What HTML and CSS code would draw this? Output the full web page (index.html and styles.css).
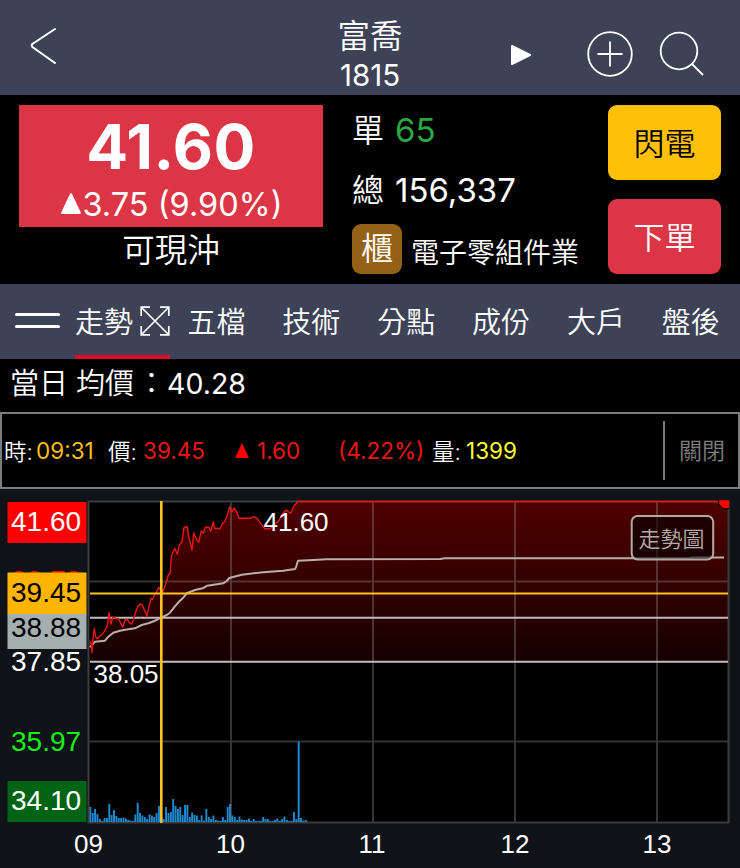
FILE: index.html
```html
<!DOCTYPE html>
<html lang="zh-Hant">
<head>
    <meta charset="UTF-8">
    <meta name="viewport" content="width=device-width, initial-scale=1.0">
    <title>富喬 1815</title>
    <link rel="stylesheet" href="styles.css">
</head>
<body>
    <header class="topbar">
        <svg class="back" viewBox="0 0 27 38"><path d="M25 2 L2.4 17 Q1 18.5 2.4 20 L25 36"/></svg>
        <div class="title">
            <div class="stock-name">富喬</div>
            <div class="stock-id">1815</div>
        </div>
        <div class="actions">
            <svg class="play" viewBox="0 0 22 22"><path d="M2 2 L20 11 L2 20 Z"/></svg>
            <svg class="add" viewBox="0 0 46 46"><circle cx="23" cy="23" r="21.8"/><path d="M10.5 23 H35.5 M23 10.5 V35.5"/></svg>
            <svg class="search" viewBox="0 0 46 46"><circle cx="20" cy="20" r="18.3"/><path d="M32.5 32.5 L44 44"/></svg>
        </div>
    </header>

    <section class="quote">
        <div class="price-col">
            <div class="price-box">
                <div class="price">41.60</div>
                <div class="change"><svg class="up" viewBox="0 0 21 22"><path d="M10.5 2 L19 20 H2 Z"/></svg><span>3.75 (9.90%)</span></div>
            </div>
            <div class="daytrade">可現沖</div>
        </div>
        <div class="detail">
            <div class="row"><span class="label">單</span><span class="num green">65</span></div>
            <div class="row"><span class="label">總</span><span class="num">156,337</span></div>
            <div class="row"><span class="market">櫃</span><span class="industry">電子零組件業</span></div>
        </div>
        <div class="buttons">
            <button class="btn flash">閃電</button>
            <button class="btn order">下單</button>
        </div>
    </section>

    <nav class="tabs">
        <div class="menu"><i></i><i></i></div>
        <div class="tab active">
            <span>走勢</span>
            <svg class="expand" viewBox="0 0 30 30"><path d="M1.5 1.5 L28.5 28.5 M28.5 1.5 L1.5 28.5 M10 1.2 H1.2 V10 M20 1.2 H28.8 V10 M1.2 20 V28.8 H10 M28.8 20 V28.8 H20"/></svg>
        </div>
        <div class="tab">五檔</div>
        <div class="tab">技術</div>
        <div class="tab">分點</div>
        <div class="tab">成份</div>
        <div class="tab">大戶</div>
        <div class="tab">盤後</div>
    </nav>

    <div class="average"><span class="avg-day">當日</span><span class="avg-label">均價<i>：</i></span><span class="avg-num">40.28</span></div>

    <div class="tick">
        <span class="time"><b>時:</b><span class="amber">09:31</span></span>
        <span class="deal"><b>價:</b><span class="red">39.45</span></span>
        <span class="diff red"><svg class="up-small" viewBox="0 0 14 15"><path d="M7 0 L14 15 H0 Z"/></svg><span>1.60</span></span>
        <span class="pct red">(4.22%)</span>
        <span class="vol"><b>量:</b><span class="yellow">1399</span></span>
        <span class="close">關閉</span>
    </div>

    <svg class="chart" viewBox="0 489 740 379">
        <defs>
            <linearGradient id="area" gradientUnits="userSpaceOnUse" x1="0" y1="501" x2="0" y2="661">
                <stop offset="0" stop-color="#500000"/>
                <stop offset="1" stop-color="#170000"/>
            </linearGradient>
            <clipPath id="plot"><rect x="89" y="500.5" width="640" height="322"/></clipPath>
        </defs>
        <rect class="plot-bg" x="89" y="501" width="640" height="321"/>
        <polygon id="priceArea" fill="url(#area)"/>
        <path class="grid" d="M231 501V822 M373 501V822 M515 501V822 M657 501V822 M89 581.5H728 M89 741.5H728"/>
        <path class="frame" d="M88.5 501.5H728.5V822.5H88.5Z"/>
        <g id="volume"></g>
        <path class="ref" d="M90 617.8H728 M90 661.8H728"/>
        <polyline class="avg-line" points="90,647.3 91.7,645 95,641.7 105,640.7 108.3,636.7 113.3,632.7 120,630.7 128.3,629.3 135,628.3 141.7,625 148.3,623.3 155,620.7 161.7,617.3 166.7,615 170,612.7 173.3,608.3 178.3,602.3 182.7,598.3 186.7,593.3 195,590 202.7,588.3 207.3,585.7 223.3,583.3 226.7,581 229.3,578 241.7,574.7 263.3,572.3 283.3,570.7 295,569 296,567.3 298,560.7 313.3,560 326.7,559.3 440,559 445,558.2 690,558.2 692,557.5 724,557.5"/>
        <polyline class="price-line" id="priceLine"/>
        <path class="cross" d="M90 593.5H728"/>
        <path class="cross vertical" d="M161.3 501V823"/>
        <circle class="dot" cx="726" cy="501.5" r="7.5" clip-path="url(#plot)"/>

        <g class="mark">
            <text x="263.5" y="531">41.60</text>
            <text x="93.5" y="683">38.05</text>
        </g>

        <g class="axis-y">
            <text x="11" y="590" class="t-red">39.72</text>
            <rect x="7.5" y="502" width="79" height="41" fill="#f00"/>
            <text x="11" y="531">41.60</text>
            <rect x="7.5" y="572.5" width="79" height="42" fill="#ffb400"/>
            <text x="11" y="602" class="t-black">39.45</text>
            <rect x="7.5" y="614" width="79" height="35" fill="#a5afaf"/>
            <text x="11" y="637" class="t-black">38.88</text>
            <text x="11" y="670.5">37.85</text>
            <text x="11" y="750.5" class="t-green">35.97</text>
            <rect x="7.5" y="781" width="79" height="41" fill="#006414"/>
            <text x="11" y="810">34.10</text>
        </g>
        <g class="axis-x">
            <text x="88.5" y="852.5">09</text>
            <text x="230.5" y="852.5">10</text>
            <text x="372" y="852.5">11</text>
            <text x="515" y="852.5">12</text>
            <text x="657" y="852.5">13</text>
        </g>

        <rect class="type-box" x="631.7" y="516" width="81.5" height="43.5" rx="6"/>
        <text class="type-text" x="638.5" y="546.5">走勢圖</text>
    </svg>

    <script>
        // price line, up to the moment it hits the limit price
        const price = '90,641.7 91,643 92,652.7 93,638.3 94.3,628.3 95.7,636.7 97.3,638.7 100,636 102.7,634 105.3,629.3 107.3,626 109,612.7 111,624 112.7,617.3 115,618 116.7,618.7 118.3,618.3 120,621.7 122.7,627.3 125,620 127.3,619.3 129.3,622.7 131.7,624 133.3,620 135.7,611.7 137.7,606.7 140,604 142.3,605 144.7,610.7 147,615.7 149,606.7 151,598.3 152.7,599.3 155,594 156.7,591.7 158.7,587.3 160.7,590 162.7,591.7 164.7,587.3 166.7,580.7 168.3,575 170.3,572.7 171.3,556.7 172.7,552.7 174.7,548.3 177.3,554.3 179.3,545 182,541.7 184,527.3 187.3,526.7 188.7,536.7 192,550 193.7,532.7 196,538.3 198.7,542.3 201.3,530.7 203.3,533.3 205.3,527.3 208.7,527.3 210.7,531.3 213.3,521.7 214.7,528.3 220,528.7 222.7,523.3 224.7,521.7 227.3,515 229.7,506.7 232,511.7 234,508 236.7,511.7 239,518.3 250,518.3 254,516.7 257.3,518.7 260.7,523.3 264.7,528.7 270,528.7 275,523.3 278.3,521.7 281.7,515 286,510 290.7,513.3 294,506 298,501.5 728,501.5';
        document.getElementById('priceLine').setAttribute('points', price);
        document.getElementById('priceArea').setAttribute('points', price + ' 728,661 90,661');

        // one bar per minute from 09:00
        const volumes = [
            15, 9, 13, 8, 3, 1, 4, 4, 18, 7,
            12, 6, 4, 4, 4.5, 3.5, 2, 1.5, 1, 7.5,
            19, 9, 6.5, 5, 3, 7.5, 6.5, 5, 9, 16,
            5, 3, 15, 9, 10, 23, 16, 13, 15, 7,
            17, 17, 5, 9.5, 7, 6.5, 2, 6.5, 1.5, 13,
            5, 3, 6.5, 2, 1.5, 1, 5, 2, 15, 18,
            6.5, 5, 2, 5.5, 2.5, 2, 2, 3.5, 1, 3,
            1, 1, 1, 5, 3, 3, 1, 1, 2, 3.5,
            1, 3, 5.5, 2, 1, 1, 10, 3, 80.5, 4,
            1.5, 2
        ];
        const volume = document.getElementById('volume');
        volumes.forEach((v, i) => {
            const bar = document.createElementNS('http://www.w3.org/2000/svg', 'rect');
            bar.setAttribute('x', 89.4 + i * 2.367);
            bar.setAttribute('y', 822 - v);
            bar.setAttribute('width', 1.9);
            bar.setAttribute('height', v);
            volume.appendChild(bar);
        });
    </script>
</body>
</html>
```
FILE: styles.css
```css
* {
    box-sizing: border-box;
}
body {
    margin: 0;
    width: 740px;
    height: 868px;
    overflow: hidden;
    background: #000;
    color: #fff;
    font-family: Inter, "Noto Sans CJK TC", sans-serif;
    font-weight: 350;
    white-space: nowrap;
}
svg {
    display: block;
    flex: none;
}

/* top bar */
.topbar {
    display: grid;
    grid-template-columns: 1fr 100px 1fr;
    height: 95px;
    padding-left: 30px;
    background: #3e4256;
}
.back {
    width: 27px;
    height: 38px;
    margin-top: 27px;
    fill: none;
    stroke: #fff;
    stroke-width: 2;
    stroke-linecap: round;
}
.title {
    margin-left: -15px;
    width: 100px;
    padding-top: 17px;
    text-align: center;
}
.stock-name {
    font-size: 32.5px;
    line-height: 40px;
}
.stock-id {
    font-size: 29.5px;
    font-weight: 400;
    line-height: 36px;
}
.actions {
    display: flex;
    justify-content: flex-end;
    padding: 31px 35px 0 0;
}
.actions svg {
    fill: none;
    stroke: #fff;
    stroke-width: 1.8;
}
.actions .play {
    width: 22px;
    height: 22px;
    margin: 13px 55px 0 0;
    fill: #fff;
    stroke-width: 2;
    stroke-linejoin: round;
}
.add {
    width: 46px;
    height: 46px;
    margin-right: 26px;
}
.search {
    width: 46px;
    height: 46px;
}

/* quote */
.quote {
    display: flex;
    height: 189px;
    padding: 10px 19px;
}
.price-col {
    width: 304px;
    text-align: center;
}
.price-box {
    height: 122px;
    background: #dc3546;
}
.price {
    padding-top: 5px;
    font-size: 62px;
    font-weight: 700;
    line-height: 74px;
    letter-spacing: 0.4px;
}
.change {
    display: flex;
    justify-content: center;
    font-size: 32.5px;
    font-weight: 400;
    line-height: 41px;
}
.up {
    width: 22px;
    height: 23px;
    margin: 8px 1px 0 0;
    fill: #fff;
    stroke: #fff;
    stroke-width: 2;
    stroke-linejoin: round;
}
.daytrade {
    font-size: 32.5px;
    line-height: 48px;
}
.detail {
    flex: 1;
    padding-left: 29px;
}
.row {
    display: flex;
    align-items: center;
    height: 50px;
    margin-bottom: 10px;
}
.row:nth-child(2) {
    margin-bottom: 9px;
}
.label {
    width: 43px;
    margin-top: -4px;
    font-size: 32px;
}
.num {
    font-size: 33px;
    font-weight: 400;
}
.green {
    color: #28a745;
}
.market {
    width: 50px;
    height: 50px;
    margin-right: 9px;
    border-radius: 9px;
    background: #946216;
    font-size: 32px;
    line-height: 50px;
    text-align: center;
}
.industry {
    padding-top: 4px;
    font-size: 28px;
}
.buttons {
    display: flex;
    flex-direction: column;
    gap: 19px;
    width: 113px;
}
.btn {
    height: 75px;
    padding: 0 0 2px;
    border: 0;
    border-radius: 9px;
    font: inherit;
    font-size: 31px;
}
.flash {
    background: #ffc107;
    color: #000;
}
.order {
    background: #dc3546;
    color: #fff;
}

/* tabs */
.tabs {
    display: flex;
    height: 75px;
    padding-left: 15px;
    background: #3e4256;
    font-size: 29px;
    line-height: 78px;
}
.menu {
    display: flex;
    flex: none;
    flex-direction: column;
    gap: 9px;
    width: 45px;
    margin-right: 15px;
    padding-top: 29px;
}
.menu i {
    height: 3px;
    border-radius: 2px;
    background: #fff;
}
.tab {
    flex: none;
    width: 94.9px;
}
.tab.active {
    display: flex;
    justify-content: space-between;
    height: 75px;
    margin-right: 17.5px;
    border-bottom: 4px solid #e10a28;
}
.expand {
    width: 30px;
    height: 30px;
    margin-top: 22px;
    fill: none;
    stroke: #fff;
    stroke-width: 1.7;
}

/* average price */
.average {
    display: flex;
    height: 53px;
    padding-left: 10px;
    font-size: 29px;
    line-height: 50px;
}
.avg-day {
    width: 66px;
}
.avg-label {
    width: 91px;
}
.avg-label i {
    margin-left: 3px;
    font-style: normal;
}
.avg-num {
    font-size: 28.5px;
    font-weight: 400;
}

/* selected tick */
.tick {
    display: flex;
    align-items: center;
    height: 77px;
    padding-left: 2px;
    border: 2px solid #7d7d7d;
    font-size: 22.5px;
    font-weight: 400;
}
.tick b {
    margin-top: -2px;
    font-weight: 350;
}
.tick > span {
    display: flex;
    align-items: center;
}
.time {
    width: 104px;
}
.time b {
    width: 32px;
}
.deal {
    width: 127px;
}
.deal b {
    width: 35px;
}
.diff {
    width: 103px;
}
.up-small {
    width: 14px;
    height: 15px;
    margin-right: 8px;
    fill: #f00;
}
.pct {
    width: 94px;
}
.vol {
    width: 231px;
}
.vol b {
    width: 34px;
}
.close {
    height: 59px;
    padding: 0 0 3px 14px;
    border-left: 2px solid #7d7d7d;
    color: #7d7d7d;
    font-size: 23px;
    font-weight: 350;
}
.amber {
    color: #ffbe14;
}
.red {
    color: #f01414;
}
.yellow {
    color: #ffff32;
}

/* chart */
.chart {
    width: 740px;
    height: 379px;
    background: #0f1317;
    font-family: "Liberation Sans", Arial, sans-serif;
    font-weight: 400;
}
.plot-bg {
    fill: #000;
}
.grid {
    fill: none;
    stroke: rgba(160, 160, 160, 0.32);
    stroke-width: 2;
}
.frame {
    fill: none;
    stroke: #3c3c3c;
    stroke-width: 2;
}
#volume {
    fill: #1e8cd2;
}
.ref {
    stroke: #c3b9be;
    stroke-width: 2;
}
.avg-line {
    fill: none;
    stroke: #b9afaa;
    stroke-width: 2;
    stroke-linejoin: round;
}
.price-line {
    fill: none;
    stroke: #f01414;
    stroke-width: 1.4;
    stroke-linejoin: round;
}
.cross {
    stroke: #ffc31e;
    stroke-width: 2;
}
.cross.vertical {
    stroke-width: 2.6;
}
.dot {
    fill: #f00;
    stroke: #1e0000;
    stroke-width: 1.5;
}
.mark,
.axis-x {
    fill: #fff;
    font-size: 26px;
}
.axis-x {
    text-anchor: middle;
}
.axis-y {
    fill: #fff;
    font-size: 28px;
}
.t-black {
    fill: #000;
}
.t-red {
    fill: #f00;
}
.t-green {
    fill: #14f014;
}
.type-box {
    fill: rgba(0, 0, 0, 0.55);
    stroke: #b4aaa5;
    stroke-width: 2;
}
.type-text {
    fill: #b4aaa5;
    font-family: "Noto Sans CJK TC", sans-serif;
    font-size: 22px;
    font-weight: 350;
}
```
